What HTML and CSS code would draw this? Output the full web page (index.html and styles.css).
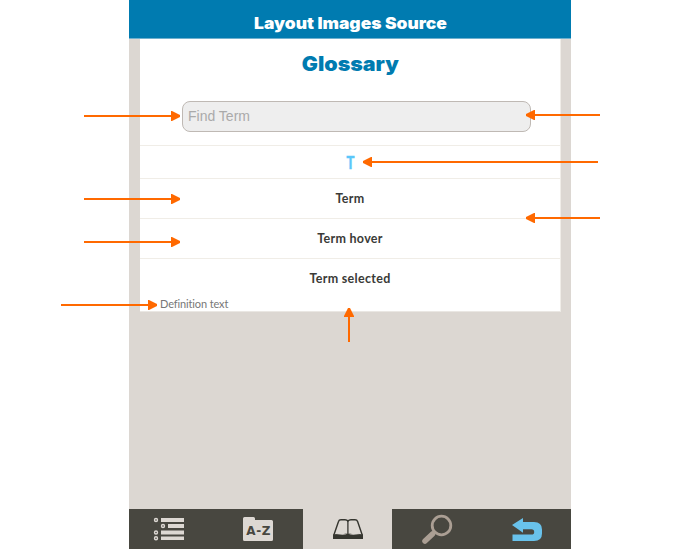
FILE: index.html
```html
<!DOCTYPE html>
<html lang="en">
<head>
<meta charset="utf-8">
<title>Glossary</title>
<link rel="stylesheet" href="styles.css">
</head>
<body>
<div class="device">
  <header class="topbar"><span>Layout Images Source</span></header>
  <main class="content">
    <section class="card">
      <div class="intro">
        <h1><span>Glossary</span></h1>
        <div class="search"><span>Find Term</span></div>
      </div>
      <div class="letter"><span>T</span></div>
      <div class="term"><span>Term</span></div>
      <div class="term"><span>Term hover</span></div>
      <div class="term"><span>Term selected</span></div>
      <div class="definition"><span>Definition text</span></div>
    </section>
  </main>
  <nav class="nav">
    <div class="tab">
      <svg width="87" height="40" viewBox="129 509 87 40">
        <g fill="#ddd8d3"><path d="M161 518h23v4h-23zM168 524h16v4h-16zM161 530.5h23v4h-23zM161 536.500h23v3.500h-23z"/></g>
        <g fill="none" stroke="#ddd8d3" stroke-width="1.400"><circle cx="156" cy="520" r="1.500"/><circle cx="163" cy="526" r="1.500"/><circle cx="156" cy="532.500" r="1.500"/><circle cx="156" cy="538.200" r="1.500"/></g>
      </svg>
    </div>
    <div class="tab">
      <svg width="87" height="40" viewBox="216 509 87 40">
        <path fill="#ddd8d3" d="M244.500 517h9q1.500 0 1.500 1.500v1.500h16.500q1.500 0 1.500 1.500v18q0 1.500-1.500 1.500h-27q-1.500 0-1.500-1.500v-21q0-1.500 1.500-1.500z"/>
        <text class="az" x="246.300" y="535" textLength="24.200" lengthAdjust="spacing">A-Z</text>
      </svg>
    </div>
    <div class="tab active">
      <svg width="89" height="40" viewBox="303 509 89 40">
        <path fill="#ddd8d3" stroke="#35352f" stroke-width="1.400" d="M333.700 535.500L338.500 521.500Q339 519.700 341 519.700H345Q347 519.700 347.900 521Q349 519.700 351 519.700H355Q357 519.700 357.600 521.500L362.400 535.500"/>
        <path stroke="#35352f" stroke-width="1.300" d="M347.900 520v14"/>
        <path fill="#35352f" d="M333 534.500q8-1.500 14.900-.8 7-.7 15.100.8v4.500h-30z"/>
        <path fill="#ddd8d3" d="M335.500 534q6-2.500 11 .2l-4 .6zM349.300 534.200q5-2.700 11-.2l-7 .8z"/>
      </svg>
    </div>
    <div class="tab">
      <svg width="90" height="40" viewBox="392 509 90 40">
        <circle cx="441.500" cy="525.500" r="9.300" fill="none" stroke="#ab9f94" stroke-width="2.800"/>
        <path stroke="#ab9f94" stroke-width="5.500" stroke-linecap="round" d="M432.500 534L425 541"/>
      </svg>
    </div>
    <div class="tab">
      <svg width="89" height="40" viewBox="482 509 89 40">
        <path fill="#69c2eb" d="M512 525L523 518v4h11q8 0 8 7.500v4q0 7.500-8 7.500h-21.500v-6.500h19q2.700 0 2.700-2.600t-2.700-2.600H523v3.500z"/>
      </svg>
    </div>
  </nav>
</div>
<svg class="callouts" width="700" height="549" viewBox="0 0 700 549">
  <defs><marker id="tip" markerUnits="userSpaceOnUse" markerWidth="10" markerHeight="10" refX="0" refY="5" orient="auto"><path d="M0 0h1L9 4v2L1 10H0z" fill="#ff6900"/></marker></defs>
  <g class="arrows">
    <path d="M84 116H171"/>
    <path d="M84 199H171"/>
    <path d="M84 242H171"/>
    <path d="M61 305H148"/>
    <path d="M600 115H535"/>
    <path d="M598 162H372"/>
    <path d="M600 218H535"/>
    <path d="M349 342V317"/>
  </g>
</svg>
</body>
</html>
```

FILE: styles.css
```css
* { box-sizing: border-box; }
body { margin: 0; width: 700px; height: 549px; overflow: hidden; background: #fff; font-family: Inter, "Liberation Sans", sans-serif; }
span { white-space: nowrap; }
.device { width: 442px; height: 549px; margin-left: 129px; display: flex; flex-direction: column; background: #dcd7d2; }
.topbar { height: 39px; padding-top: 7px; background: #007bb0; border-bottom: 1px solid #6fb0ce; color: #fff; text-align: center; font-size: 16px; line-height: 32px; font-weight: 900; }
.topbar span { display: inline-block; transform: scaleX(1.09); }
.content { flex: 1; padding: 0 10px 0 11px; }
.card { height: 273px; background: #fff; border-right: 1px solid #f0ede8; border-bottom: 1px solid #eae7e3; }
.intro { height: 106px; padding: 9px 29px 0 42px; }
h1 { margin: 0; height: 53px; padding-right: 12px; color: #007bb0; text-align: center; font-size: 20px; line-height: 32px; font-weight: 900; }
h1 span { display: inline-block; transform: scaleX(1.07); }
.search { height: 31px; padding-left: 5px; background: #eee; border: 1px solid #bfb9b4; border-radius: 8px; color: #aaa; font: 14px/29px "Liberation Sans", sans-serif; }
.letter { height: 33px; border-top: 1px solid #f0ede7; text-align: center; color: #5bc7fa; font: 700 18px/34px "Liberation Sans", sans-serif; }
.letter span { display: inline-block; transform: scaleX(.72); -webkit-text-stroke: .5px #5bc7fa; }
.term { height: 40px; border-top: 1px solid #f0ede7; text-align: center; color: #3a3a37; font-family: Lato, sans-serif; font-weight: 700; font-size: 12.5px; line-height: 39px; letter-spacing: .3px; }
.definition { margin-top: -1px; padding-left: 20px; color: #777; font: 11px/14px Lato, sans-serif; letter-spacing: -.13px; font-variant-ligatures: none; }
.nav { height: 40px; display: grid; grid-template-columns: 87px 87px 89px 90px 89px; background: #484740; }
.tab svg { display: block; }
.active { background: #dcd7d2; }
.az { fill: #484740; font: 700 12px "DejaVu Sans", sans-serif; }
.callouts { position: absolute; left: 0; top: 0; pointer-events: none; }
.arrows path { stroke: #ff6900; stroke-width: 2; marker-end: url(#tip); }
```
